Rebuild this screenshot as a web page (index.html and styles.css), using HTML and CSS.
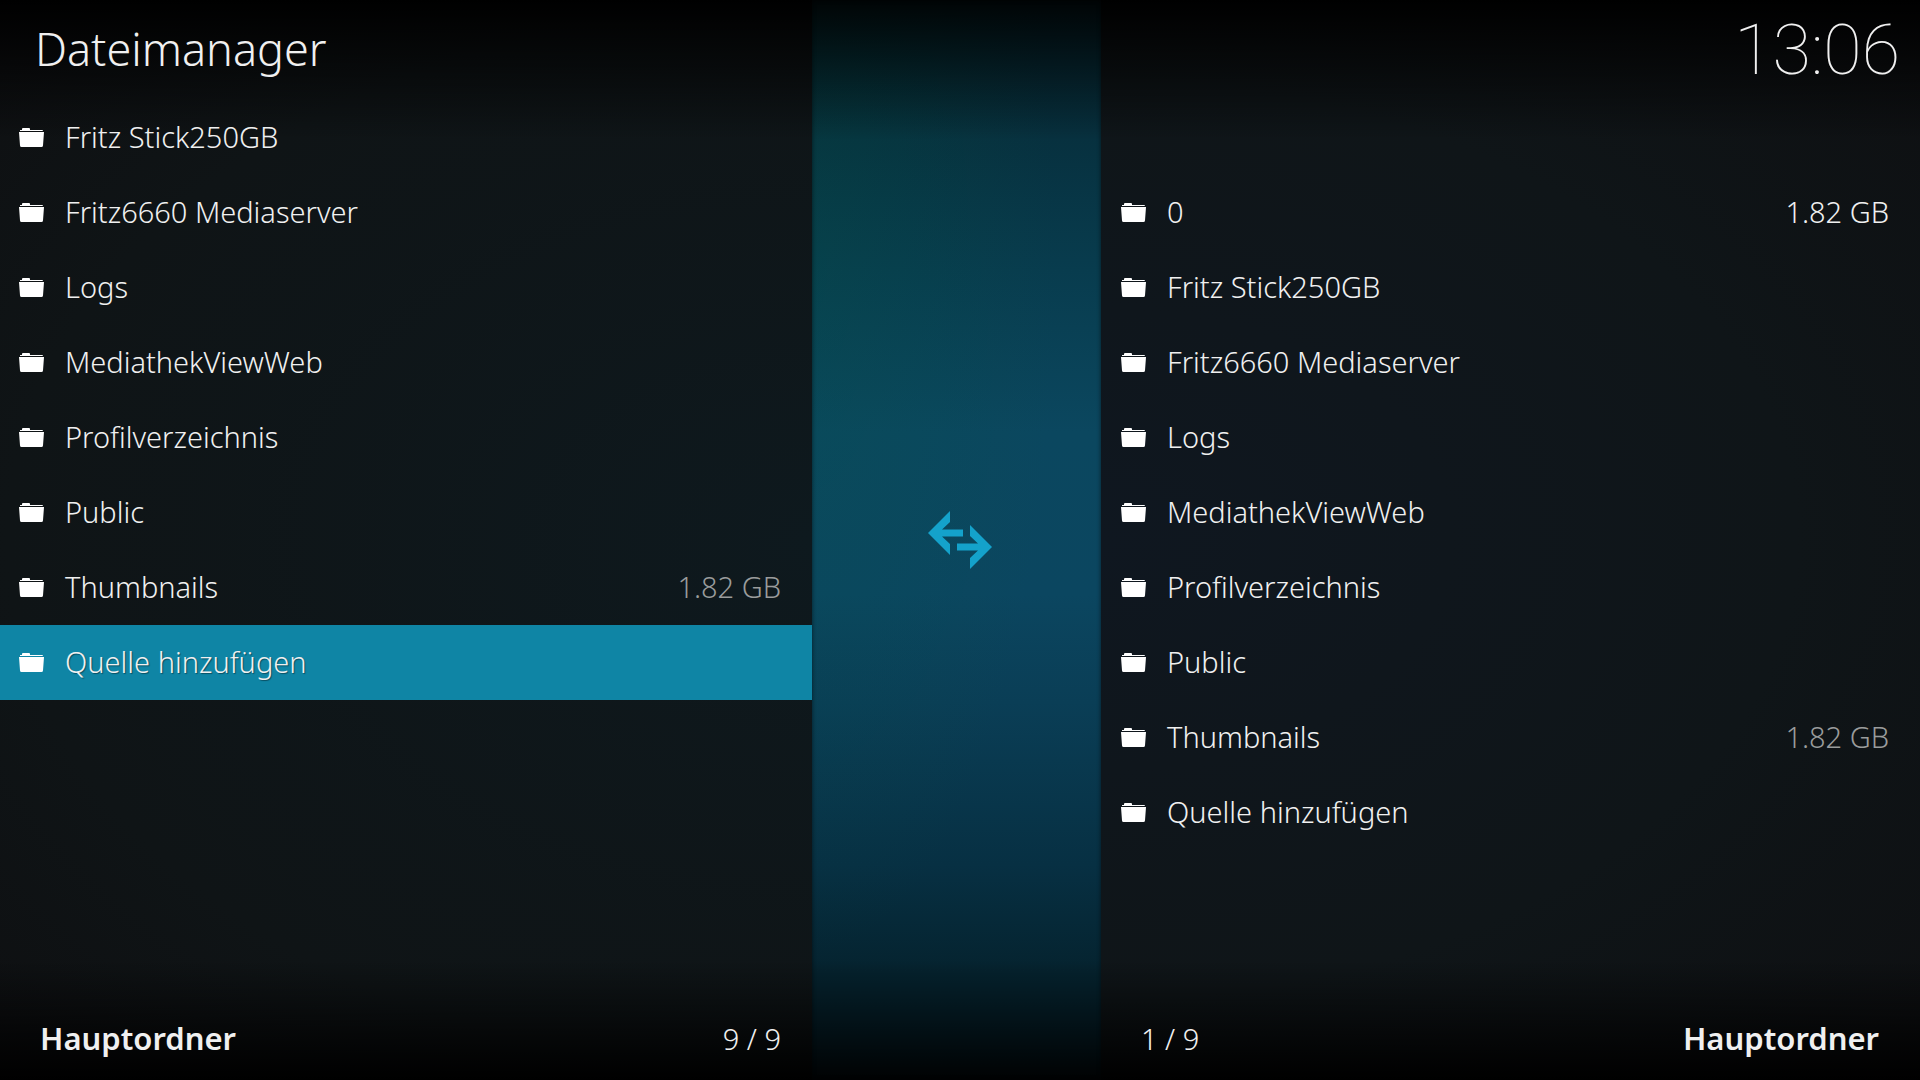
FILE: index.html
```
<!DOCTYPE html>
<html lang="de">

<head>
    <meta charset="UTF-8">
    <meta name="viewport" content="width=device-width, initial-scale=1.0">
    <title>Dateimanager</title>
    <link rel="stylesheet" href="styles.css">
</head>

<body>
    <svg class="symbols" aria-hidden="true">
        <symbol id="folder" viewBox="0 0 25 19">
            <path d="M1 3V2H3V1Q3 0 4 0H10Q11 0 11 1V2H23Q24 2 24 3Z" />
            <path d="M0 4H25L24 17.500Q23.900 19 22.500 19H2.500Q1.100 19 1 17.500Z" />
        </symbol>
    </svg>
    <main class="manager">
        <section class="panel left">
            <header class="top">
                <h1>Dateimanager</h1>
            </header>
            <ul class="list" id="leftList"></ul>
            <footer class="bottom">
                <b>Hauptordner</b>
                <span>9 / 9</span>
            </footer>
        </section>
        <div class="middle">
            <svg class="arrows" viewBox="0 0 64 58" aria-hidden="true">
                <path d="M0 22L22 0V11L14 18.500H35V25.500H14L22 33V44Z" />
                <path d="M64 36L42 14V25L50 32.500H29V39.500H50L42 47V58Z" />
            </svg>
        </div>
        <section class="panel right">
            <header class="top">
                <time class="clock">13:06</time>
            </header>
            <ul class="list" id="rightList"></ul>
            <footer class="bottom">
                <span>1 / 9</span>
                <b>Hauptordner</b>
            </footer>
        </section>
    </main>
    <script>
        let leftItems = [
            { name: "Fritz Stick250GB" },
            { name: "Fritz6660 Mediaserver" },
            { name: "Logs" },
            { name: "MediathekViewWeb" },
            { name: "Profilverzeichnis" },
            { name: "Public" },
            { name: "Thumbnails", size: "1.82 GB" },
            { name: "Quelle hinzufügen", state: "selected" }
        ];
        let rightItems = [
            { name: "0", size: "1.82 GB", state: "current" },
            { name: "Fritz Stick250GB" },
            { name: "Fritz6660 Mediaserver" },
            { name: "Logs" },
            { name: "MediathekViewWeb" },
            { name: "Profilverzeichnis" },
            { name: "Public" },
            { name: "Thumbnails", size: "1.82 GB" },
            { name: "Quelle hinzufügen" }
        ];

        function render(id, items) {
            let mess = "";
            for (let i = 0; i < items.length; i++) {
                mess += `
            <li>
                <button class="item ${items[i].state || ""}">
                    <svg class="folder" aria-hidden="true"><use href="#folder"></use></svg>
                    <span class="name">${items[i].name}</span>
                    <span class="size">${items[i].size || ""}</span>
                </button>
            </li>
        `;
            }
            document.getElementById(id).innerHTML = mess;
        }

        render("leftList", leftItems);
        render("rightList", rightItems);
    </script>
</body>

</html>
```
FILE: styles.css
```
* {
    margin: 0;
    padding: 0;
    box-sizing: border-box;
}

body {
    background-color: black;
    color: #f0f0f0;
    font-family: "Noto Sans", sans-serif;
    font-size: 29px;
    font-weight: 300;
}

.symbols {
    display: none;
}

.manager {
    display: grid;
    grid-template-columns: 812fr 289fr 819fr;
    min-height: 100vh;
}

.panel {
    display: flex;
    flex-direction: column;
    min-width: 0;
}

.left {
    background: linear-gradient(black, transparent 140px, transparent calc(100% - 120px), black),
        radial-gradient(ellipse at 100% 50%, #0e191e, #0f1416 70%, #0e0f11);
}

.right {
    background: linear-gradient(black, transparent 140px, transparent calc(100% - 120px), black),
        radial-gradient(ellipse at 0% 50%, #0f1720, #0f1518 60%, #0e0f11);
}

.middle {
    display: flex;
    justify-content: center;
    align-items: center;
    padding-left: 7px;
    background: linear-gradient(rgba(0, 0, 0, 0.9), transparent 140px, transparent calc(100% - 120px), rgba(0, 0, 0, 0.95)),
        radial-gradient(ellipse at 0% 25%, rgba(0, 90, 70, 0.2), transparent 60%),
        linear-gradient(#052b36, #07303e 12%, #083c4e 25%, #0b475f 40%, #0b4660 55%, #0a3e56 65%, #073043 80%, #05232f 90%);
    box-shadow: inset 0 0 4px rgba(0, 0, 0, 0.6);
}

.arrows {
    width: 64px;
    height: 58px;
    fill: #14a2cb;
}

.top {
    display: flex;
    height: 100px;
    padding-left: 35px;
    padding-right: 20px;
}

.right .top {
    justify-content: flex-end;
    height: 175px;
}

h1 {
    font-size: 45px;
    font-weight: 300;
    line-height: 98px;
}

.clock {
    font-family: Roboto, sans-serif;
    font-size: 70px;
    font-weight: 100;
    line-height: 100px;
}

.list {
    flex: 1;
    list-style: none;
}

.item {
    display: flex;
    align-items: center;
    width: 100%;
    height: 75px;
    padding-left: 19px;
    padding-right: 31px;
    border: none;
    background: none;
    color: #f0f0f0;
    font: inherit;
    text-align: left;
}

.right .item {
    padding-left: 20px;
}

.selected {
    background-color: #0f85a5;
    text-shadow: 1px 1px 1px rgba(0, 0, 0, 0.4);
}

.folder {
    width: 25px;
    height: 19px;
    margin-right: 21px;
    fill: white;
}

.name,
.size {
    padding-bottom: 2px;
}

.name {
    flex: 1;
}

.size {
    color: #9a9c9c;
}

.current .size {
    color: #f0f0f0;
}

.bottom {
    display: flex;
    justify-content: space-between;
    align-items: center;
    height: 84px;
    padding-left: 40px;
    padding-right: 31px;
}

.right .bottom {
    padding-right: 41px;
}

.bottom b {
    font-size: 31px;
    font-weight: 600;
}
```
